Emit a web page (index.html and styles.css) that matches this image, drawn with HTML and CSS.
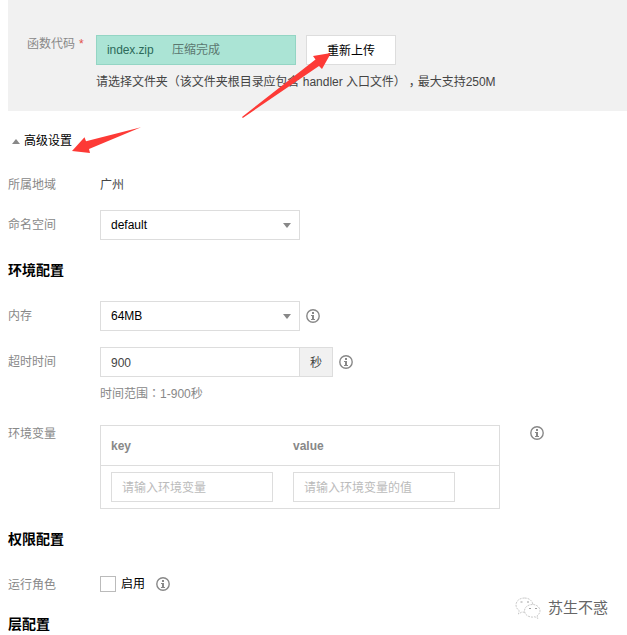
FILE: index.html
```html
<!DOCTYPE html>
<html lang="zh-CN">
<head>
<meta charset="utf-8">
<title>函数配置</title>
<link rel="stylesheet" href="styles.css">
</head>
<body>
<svg class="defs" width="0" height="0">
  <symbol id="info" viewBox="0 0 14 14">
    <circle cx="7" cy="7" r="6.2" fill="none" stroke="#888" stroke-width="1.4"/>
    <path d="M6 3h2v2H6zM5 6h3v4h1v1H5v-1h1V7H5z" fill="#888"/>
  </symbol>
</svg>
<main class="page">
  <section class="upload">
    <label class="upload-label">函数代码<span class="required">*</span></label>
    <div class="upload-body">
      <div class="upload-controls">
        <div class="file"><span class="file-name">index.zip</span><span class="file-state">压缩完成</span></div>
        <button class="button">重新上传</button>
      </div>
      <p class="upload-hint">请选择文件夹<span class="mid" lang="zh-TW">（</span>该文件夹根目录应包含 handler 入口文件<span class="mid" lang="zh-TW">）</span><span class="comma">，</span>最大支持250M</p>
    </div>
  </section>

  <div class="advanced"><i class="up"></i>高级设置</div>

  <div class="row region"><span class="label">所属地域</span><span class="text">广州</span></div>
  <div class="row namespace"><span class="label">命名空间</span><div class="select">default<i class="down"></i></div></div>

  <h3 class="heading env-heading">环境配置</h3>
  <div class="row memory"><span class="label">内存</span><div class="select">64MB<i class="down"></i></div><svg class="info"><use href="#info"/></svg></div>
  <div class="row timeout"><span class="label">超时时间</span><div class="number">900</div><div class="unit">秒</div><svg class="info"><use href="#info"/></svg></div>
  <p class="range">时间范围<span class="mid" lang="zh-TW">：</span>1-900秒</p>

  <div class="row vars">
    <span class="label">环境变量</span>
    <div class="table">
      <div class="table-row table-head"><span>key</span><span>value</span></div>
      <div class="table-row table-body"><div class="field">请输入环境变量</div><div class="field">请输入环境变量的值</div></div>
    </div>
    <svg class="info"><use href="#info"/></svg>
  </div>

  <h3 class="heading role-heading">权限配置</h3>
  <div class="row role"><span class="label">运行角色</span><i class="checkbox"></i><span class="enable">启用</span><svg class="info"><use href="#info"/></svg></div>
  <h3 class="heading layer-heading">层配置</h3>
</main>

<svg class="arrows" viewBox="0 0 627 635">
  <path d="M242 117L242.8 118L319 66L322 69L331 53L313 56L315.5 59.5Z"/>
  <path d="M141 127.2L86 141.3L84.5 137.2L72 151L90 153L89 149Z"/>
</svg>
<div class="watermark">
  <svg width="26" height="22" viewBox="0 0 26 22" fill="#fff" stroke="#bbb" stroke-width=".8" stroke-dasharray="2 1">
    <path d="M9.5 1C4.5 1 1 4 1 8c0 2.4 1.2 4.3 3.2 5.6L3.5 17l3.4-2c5.7 1 11-2 11-7 0-4-3.7-7-8.4-7Z"/>
    <path d="M17.5 7.5c-4.5 0-8 2.7-8 6.3s3.5 6.3 8 6.3l2.4-.3 3 1.6-.8-2.6c1.7-1.2 2.9-2.9 2.9-5 0-3.5-3.3-6.3-7.5-6.3Z"/>
    <path d="M5.5 5h2M12 5h2M14 11.5h2M20 11.5h2" stroke="#888" stroke-dasharray="none"/>
  </svg>
  <span>苏生不惑</span>
</div>
</body>
</html>
```
FILE: styles.css
```css
* { box-sizing: border-box; }
html, body { height: 635px; overflow: hidden; }
body {
  margin: 0;
  position: relative;
  background: #fff;
  color: #444;
  font: 12px/18px "Liberation Sans", "Noto Sans CJK SC", sans-serif;
}
p, h3 { margin: 0; }
.defs { position: absolute; }
.page { padding-left: 8px; }
.mid { font-family: "Noto Sans CJK TC", sans-serif; line-height: 1; text-spacing-trim: space-all; }
.comma { padding: 0 3px; font-feature-settings: "halt"; text-spacing-trim: space-all; }

.upload { display: flex; height: 111px; padding: 35px 0 0 19px; background: #f1f1f1; }
.upload-label { width: 69px; color: #888; }
.required { margin-left: 4px; color: #e1504a; }
.upload-controls { display: flex; gap: 10px; }
.file {
  display: flex;
  width: 200px;
  height: 30px;
  padding-left: 10px;
  border: 1px solid #94d5c4;
  background: #abe4d5;
  line-height: 29px;
}
.file-name { width: 65px; color: #2c6a5a; letter-spacing: -.1px; }
.file-state { color: #5b7770; }
.button {
  width: 90px;
  height: 30px;
  padding: 2px 0 0;
  border: 1px solid #ddd;
  background: #fff;
  color: #000;
  font: inherit;
}
.upload-hint { margin-top: 8px; white-space: nowrap; letter-spacing: -.03px; }

.advanced { display: flex; align-items: center; gap: 4px; height: 18px; margin: 21px 0 0 4px; color: #000; }
.up { border: 4px solid transparent; border-top: 0; border-bottom: 5px solid #888; }
.down { border: 4px solid transparent; border-bottom: 0; border-top: 5px solid #888; }

.row { display: flex; align-items: center; height: 30px; }
.label { flex: none; width: 92px; color: #888; line-height: 18px; }
.region { margin-top: 20px; }
.namespace { margin-top: 10px; }
.select, .number {
  display: flex;
  align-items: center;
  justify-content: space-between;
  width: 200px;
  height: 30px;
  padding: 0 8px 0 10px;
  border: 1px solid #ddd;
  color: #000;
}
.number { padding-top: 2px; color: #444; }
.unit {
  width: 33px;
  height: 30px;
  border: 1px solid #ddd;
  border-left: 0;
  background: #f1f1f1;
  line-height: 30px;
  text-align: center;
}
.info { flex: none; width: 14px; height: 14px; margin-left: 6px; }

.heading { height: 20px; color: #000; font-size: 14px; line-height: 20px; }
.env-heading { margin-top: 20px; }
.memory { margin-top: 21px; }
.timeout { margin-top: 16px; }
.range { height: 18px; margin: 8px 0 0 92px; color: #888; }

.vars { align-items: flex-start; height: 84px; margin-top: 22px; }
.vars .label { margin-top: 0; }
.vars .info { margin: 1px 0 0 30px; }
.table { width: 400px; height: 84px; border: 1px solid #ddd; }
.table-row { display: grid; grid-template-columns: 162px 162px; column-gap: 20px; padding-left: 10px; }
.table-head { height: 40px; border-bottom: 1px solid #ddd; color: #888; font-weight: bold; line-height: 40px; }
.table-body { padding-top: 6px; }
.field { height: 30px; padding-left: 10px; border: 1px solid #ddd; color: #bbb; line-height: 30px; }

.role-heading { margin-top: 20px; }
.role { margin-top: 20px; }
.role .label { padding-top: 2px; }
.checkbox { width: 16px; height: 16px; border: 1px solid #bbb; }
.enable { margin-left: 5px; color: #000; }
.role .info { margin-left: 11px; }
.layer-heading { margin-top: 15px; }

.arrows { position: absolute; left: 0; top: 0; width: 627px; height: 635px; fill: #fd3a36; }
.watermark {
  position: absolute;
  left: 515px;
  top: 597px;
  display: flex;
  align-items: center;
  gap: 7px;
  color: #666;
  font-size: 15px;
  line-height: 22px;
}
```
